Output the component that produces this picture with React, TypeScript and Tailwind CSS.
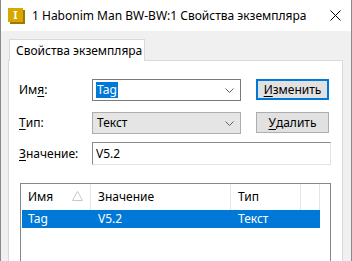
const font = { fontFamily: '"Segoe UI", "Noto Sans", "Liberation Sans", sans-serif' };

function Chevron() {
    return (
        <svg width="9" height="5" viewBox="0 0 9 5" className="text-[#606060]">
            <polyline points="0.5,0.5 4.5,4.5 8.5,0.5" fill="none" stroke="currentColor" strokeWidth="1" />
        </svg>
    );
}

function Combo({ gray, children }: { gray?: boolean; children: React.ReactNode }) {
    return (
        <div
            className={`w-[149px] h-[22px] border flex items-center pl-[3px] pr-[6px] ${
                gray ? 'bg-[#e5e5e5] border-[#adadad]' : 'bg-white border-[#7a7a7a]'
            }`}
        >
            <div className="flex-1 flex items-center">{children}</div>
            <Chevron />
        </div>
    );
}

function Button({ focused, children }: { focused?: boolean; children: React.ReactNode }) {
    return (
        <div
            className={`w-[73px] h-[21px] flex items-center justify-center bg-[#e1e1e1] text-[12px] text-black ${
                focused ? 'border-2 border-[#0078d7]' : 'border border-[#adadad]'
            }`}
        >
            {children}
        </div>
    );
}

export default function App() {
    return (
        <div style={font} className="w-[352px] h-[261px] overflow-hidden flex flex-col bg-[#f0f0f0] border-x border-[#8a8a8a] text-[12px] text-black">
            {/* title bar */}
            <div className="h-[31px] bg-white flex items-center shrink-0">
                <div className="ml-[7px] w-[17px] h-[16px] relative">
                    <div className="absolute left-[2px] top-[2px] w-[15px] h-[14px] bg-[#9c7a00]" />
                    <div className="absolute left-0 top-0 w-[15px] h-[14px] bg-[#d9a800] flex items-center justify-center">
                        <span className="text-white font-bold text-[10px] leading-none">I</span>
                    </div>
                </div>
                <span className="ml-[7px] text-[12px] leading-none">1 Habonim Man BW-BW:1 Свойства экземпляра</span>
                <svg width="11" height="11" viewBox="0 0 11 11" className="ml-auto mr-[10px]">
                    <path d="M0.5 0.5 L10.5 10.5 M10.5 0.5 L0.5 10.5" stroke="#000" strokeWidth="1" />
                </svg>
            </div>

            {/* tabs */}
            <div className="pl-[7px] pr-[8px] pt-[7px] flex flex-col flex-1">
                <div className="flex">
                    <div className="ml-[1px] w-[136px] h-[22px] bg-white border border-b-0 border-[#d9d9d9] flex items-center pl-[6px] relative top-[1px]">
                        Свойства экземпляра
                    </div>
                </div>
                <div className="flex-1 bg-white border border-b-0 border-[#d9d9d9] pl-[10px] pt-[18px]">
                    {/* row 1 */}
                    <div className="flex items-start h-[22px]">
                        <div className="w-[73px] h-[22px] flex items-center">
                            Им<span className="underline underline-offset-2">я</span>:
                        </div>
                        <Combo>
                            <span className="bg-[#0078d7] text-white px-[1px] leading-[16px]">Tag</span>
                        </Combo>
                        <div className="ml-[15px]">
                            <Button focused>
                                <span className="underline underline-offset-2">И</span>зменить
                            </Button>
                        </div>
                    </div>
                    {/* row 2 */}
                    <div className="flex items-start h-[22px] mt-[11px]">
                        <div className="w-[73px] h-[22px] flex items-center">
                            <span className="underline underline-offset-2">Т</span>ип:
                        </div>
                        <Combo gray>
                            <span className="pl-[1px]">Текст</span>
                        </Combo>
                        <div className="ml-[15px]">
                            <Button>
                                <span className="underline underline-offset-2">У</span>далить
                            </Button>
                        </div>
                    </div>
                    {/* row 3 */}
                    <div className="flex items-center h-[23px] mt-[8px]">
                        <div className="w-[73px]">
                            <span className="underline underline-offset-2">З</span>начение:
                        </div>
                        <div className="w-[239px] h-[23px] border-t border-l border-[#8a8a8a] border-r border-b border-r-[#e3e3e3] border-b-[#e3e3e3] bg-white flex items-center pl-[3px]">
                            V5.2
                        </div>
                    </div>
                    {/* list */}
                    <div className="mt-[18px] ml-[1px] w-[311px] h-[80px] border border-[#828790] border-b-0 bg-white">
                        <div className="flex h-[26px]">
                            <div className="w-[70px] flex items-center pl-[7px] border-r border-[#e5e5e5] relative">
                                Имя
                                <svg width="11" height="10" viewBox="0 0 11 10" className="absolute right-[7px] top-[7px]">
                                    <polyline points="0.5,9.5 5.5,0.5 10.5,9.5 0.5,9.5" fill="none" stroke="#c8c8c8" strokeWidth="1" />
                                </svg>
                            </div>
                            <div className="w-[140px] flex items-center pl-[7px] border-r border-[#e5e5e5]">Значение</div>
                            <div className="w-[70px] flex items-center pl-[7px] border-r border-[#e5e5e5]">Тип</div>
                            <div className="w-[19px] border-r border-[#e5e5e5]" />
                        </div>
                        <div className="flex h-[18px] ml-[1px] w-[298px] bg-[#0078d7] text-white items-center">
                            <div className="w-[69px] pl-[6px]">Tag</div>
                            <div className="w-[140px] pl-[7px]">V5.2</div>
                            <div className="w-[70px] pl-[7px]">Текст</div>
                        </div>
                    </div>
                </div>
            </div>
        </div>
    );
}
